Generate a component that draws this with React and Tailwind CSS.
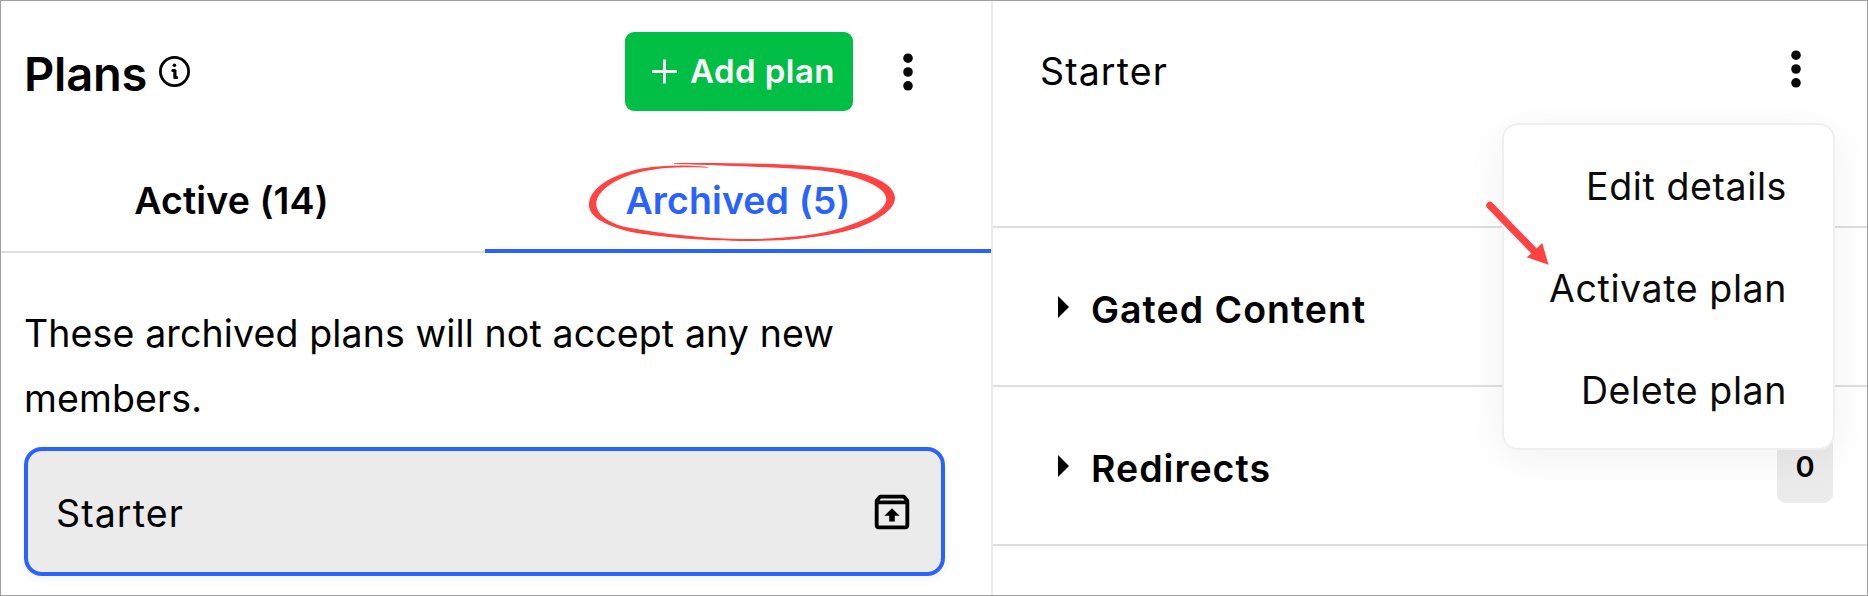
import { MdOutlineUnarchive } from 'react-icons/md';

const InfoIcon = () => (
  <svg className="w-[31px] h-[31px]" viewBox="0 0 31 31" fill="none" stroke="black" strokeWidth="2.8">
    <circle cx="15.5" cy="15.5" r="14.1" />
    <circle cx="15.4" cy="9.3" r="1.8" fill="black" stroke="none" />
    <path d="M13.9 14.5h2v7h1.7" strokeWidth="3.2" strokeLinecap="round" strokeLinejoin="round" />
  </svg>
);

const Dots = () => (
  <svg className="w-[10px] h-[38px]" viewBox="0 0 10 38" fill="#0a0a0a">
    <circle cx="5" cy="5.2" r="4.8" />
    <circle cx="5" cy="19" r="4.8" />
    <circle cx="5" cy="32.8" r="4.8" />
  </svg>
);

const Ellipse = () => (
  <svg className="absolute left-[103px] top-[18px] w-[310px] h-[84px]" viewBox="0 0 310 84" fill="#ff4242">
    <path d="M86 3C150 2.5 210 4 250 8.7C285 13 307 25 307 38C307 52 280 67 250 73C215 80 185 81 158.7 81C120 81 70 77 42 71.7C15 65 1 56 1 45C1 30 20 15 55 8.3C75 5 100 4.7 119.7 7V7.7C95 6.5 75 7.5 58.7 10.7C30 16 8.3 30 8.3 44C8.3 54 20 63 38.7 67.3C75 74 120 79 155 79C190 79 225 76 248.7 69.3C278 61 298.3 50 298.3 39C298.3 28 275 17 240 11.5C215 8 150 6.3 86 3.8Z" />
  </svg>
);

const Arrow = () => (
  <svg className="absolute -left-[19px] top-[75px] w-[66px] h-[66px]" viewBox="0 0 66 66">
    <path d="M5 5.5L50 52" stroke="#ff4242" strokeWidth="7.4" strokeLinecap="round" />
    <path d="M63.5 64.7L57.2 43L52 48L47 53L41.7 57.2Z" fill="#ff4242" />
  </svg>
);

const Section = ({ title, count }) => (
  <div className="flex items-center h-[159px] border-b-2 border-[#dedede] pl-[65px] pr-[34px]">
    <svg className="w-[11px] h-[22px]" viewBox="0 0 11 22">
      <path d="M0 0L11 11L0 22Z" />
    </svg>
    <span className="ml-[22px] pt-[6px] font-semibold tracking-[1px]">{title}</span>
    {count !== undefined && (
      <span className="ml-auto flex items-center justify-center w-14 h-[74px] rounded-[9px] bg-[#ebebeb] pt-px text-[29px] font-semibold">
        {count}
      </span>
    )}
  </div>
);

const App = () => {
  return (
    <div className="flex w-[1868px] h-[596px] overflow-hidden border border-[#a0a0a0] bg-white text-black text-[37.5px] leading-none font-['Inter',sans-serif]">
      <div className="w-[992px] shrink-0 border-r-2 border-[#ebebeb]">
        <div className="flex items-center h-[141px] pl-[23px]">
          <h1 className="w-[123px] text-[47px] font-semibold pt-[4px] tracking-[-0.2px]">Plans</h1>
          <div className="ml-[12px]">
            <InfoIcon />
          </div>
          <button className="ml-auto flex items-center w-[228px] h-[79px] rounded-[9px] bg-[#00bf44] pl-[27px] text-white text-[33px] font-semibold tracking-[0.45px]">
            <svg className="w-[25px] h-[25px] mr-[13px]" viewBox="0 0 25 25" stroke="white" strokeWidth="3">
              <path d="M0 12.5H25M12.5 0.5V24.5" />
            </svg>
            Add plan
          </button>
          <div className="ml-[50px] mr-[78px]">
            <Dots />
          </div>
        </div>

        <div className="flex h-[111px] font-semibold tracking-[0.1px]">
          <div className="flex items-center justify-center w-[484px] border-b-2 border-[#dedede] pt-[9px] pr-[23px]">
            Active (14)
          </div>
          <div className="relative flex items-center justify-center grow border-b-4 border-[#2962ff] pt-[11px] text-[#2962ff]">
            Archived (5)
            <Ellipse />
          </div>
        </div>

        <div className="px-[23px] pt-[48px]">
          <p className="w-[880px] leading-[65px] tracking-[0.12px]">These archived plans will not accept any new members.</p>
          <div className="mt-4 flex items-center justify-between w-[921px] h-[129px] rounded-[18px] border-4 border-[#2962ff] bg-[#ebebeb] pl-[28px] pr-[26px] shadow-[0_4px_10px_rgba(0,0,0,0.05)]">
            <span className="pt-[4px] tracking-[1.1px]">Starter</span>
            <MdOutlineUnarchive className="w-[46px] h-[46px]" />
          </div>
        </div>
      </div>

      <div className="relative grow">
        <div className="flex items-start justify-between h-[227px] border-b-2 border-[#dedede] pl-[47px] pr-[66px] pt-[49px]">
          <span className="pt-[3px] tracking-[1.1px]">Starter</span>
          <Dots />
        </div>
        <Section title="Gated Content" />
        <Section title="Redirects" count={0} />

        <div className="absolute right-[32px] top-[122px] w-[333px] h-[327px] rounded-[16px] border-2 border-[#efefef] bg-white bg-clip-padding pt-[11px] pr-[46px] text-[#0a0a0a] tracking-[0.6px] shadow-[0_8px_40px_rgba(0,0,0,0.06)]">
          {['Edit details', 'Activate plan', 'Delete plan'].map((item) => (
            <div key={item} className="flex items-center justify-end h-[102px]">
              {item}
            </div>
          ))}
          <Arrow />
        </div>
      </div>
    </div>
  );
};

export default App;
